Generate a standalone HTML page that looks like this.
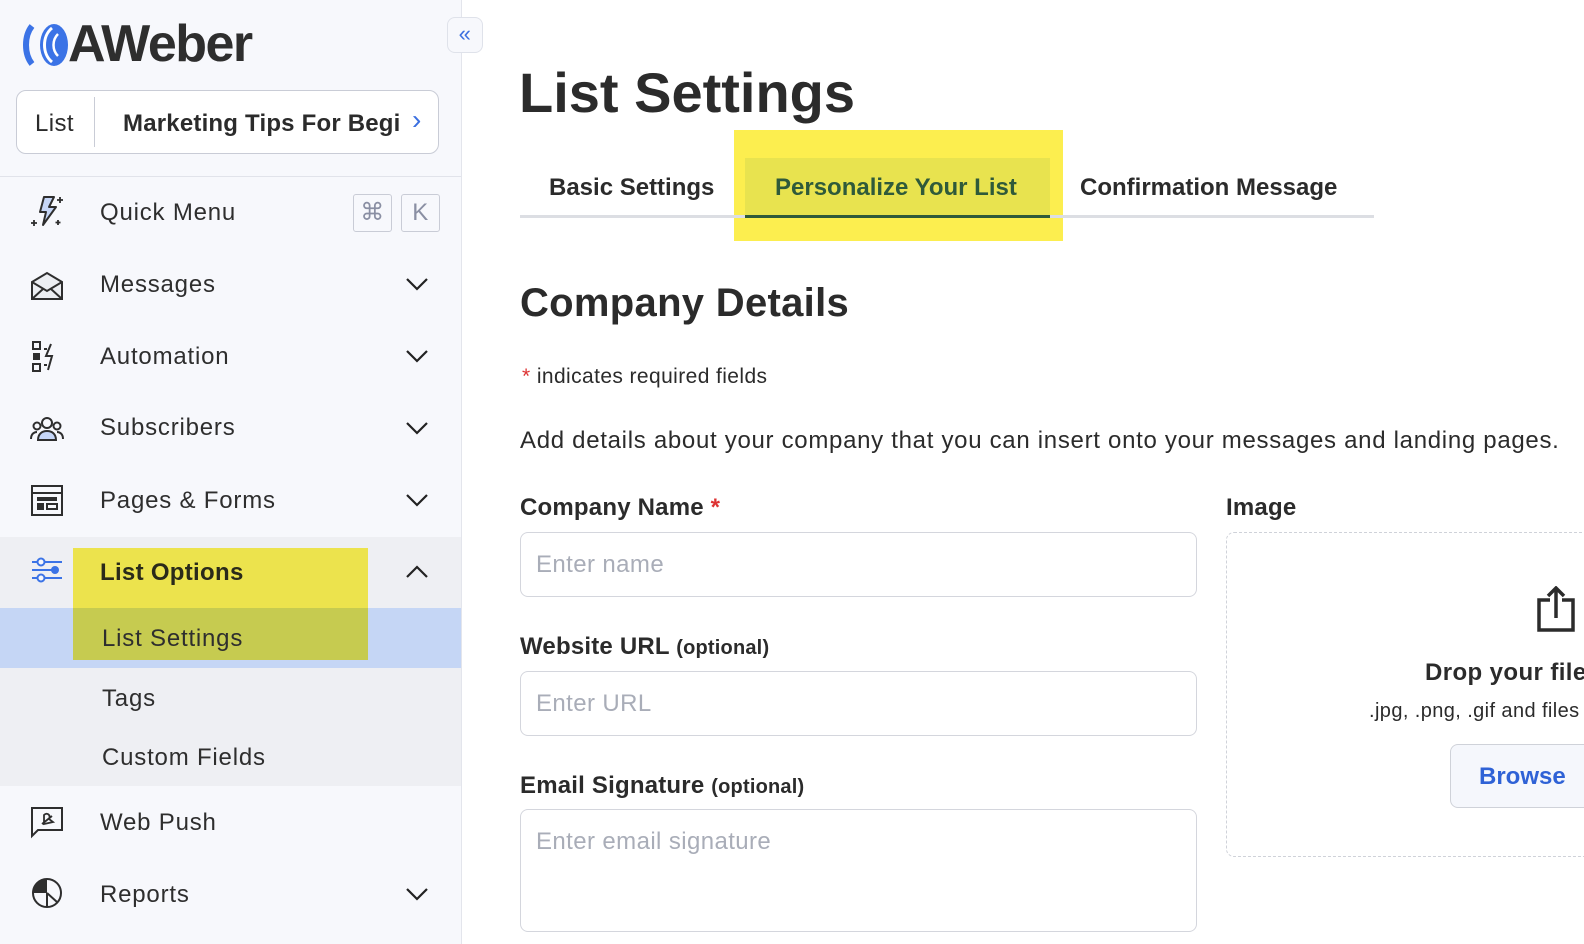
<!DOCTYPE html>
<html><head><meta charset="utf-8"><style>
*{box-sizing:border-box;margin:0;padding:0}
body{width:1584px;height:944px;overflow:hidden;background:#fff;font-family:"Liberation Sans",Roboto,sans-serif;color:#2b2b2b;position:relative;letter-spacing:0.4px}
.side{position:absolute;left:0;top:0;width:462px;height:944px;background:#f7f8fc;border-right:1px solid #e3e5ec}
.abs{position:absolute}
.nav{position:absolute;left:100px;font-size:24px;color:#2e2e2e;letter-spacing:0.8px}
.chev{position:absolute;left:405px;width:24px;height:24px}
.ic{position:absolute;left:30px;width:34px;height:34px}
.inp{position:absolute;left:520px;width:677px;height:65px;border:1px solid #d4d6dd;border-radius:8px;font-size:24px;color:#a9adb8;padding:18px 15px}
.lbl{position:absolute;left:520px;font-size:24px;font-weight:bold;color:#2b2b2b;letter-spacing:0.2px}
.lbl span{font-size:20px}
</style></head><body>
<div class="side">
 <svg class="abs" style="left:22px;top:22px" width="50" height="46" viewBox="0 0 50 46"><path d="M10 4 C2 14 2 32 10 42" stroke="#3b73e6" stroke-width="6" fill="none"/><ellipse cx="32" cy="23" rx="14" ry="21" fill="#3b73e6"/><path d="M30 6 C20 14 20 32 30 40" stroke="#fff" stroke-width="3" fill="none"/><path d="M36 12 C30 18 30 28 36 34" stroke="#fff" stroke-width="2.5" fill="none"/></svg>
 <div class="abs" style="left:68px;top:14px;font-size:52px;font-weight:bold;color:#2e2e2e;letter-spacing:-1.5px">AWeber</div>
 <div class="abs" style="left:447px;top:17px;width:36px;height:36px;border:1px solid #dfe2ea;border-radius:8px;background:#f7f8fc;color:#3b6fe0;font-size:22px;text-align:center;line-height:32px">«</div>
 <div class="abs" style="left:16px;top:90px;width:423px;height:64px;border:1px solid #c9ccd6;border-radius:10px;background:#fff"></div>
 <div class="abs" style="left:94px;top:97px;width:1px;height:50px;background:#c9ccd6"></div>
 <div class="abs" style="left:35px;top:110px;font-size:24px">List</div>
 <div class="abs" style="left:123px;top:110px;font-size:24px;font-weight:600;width:278px;overflow:hidden;white-space:nowrap;letter-spacing:0.2px">Marketing Tips For Beginners</div>
 <div class="abs" style="left:412px;top:104px;font-size:28px;color:#3b6fe0">›</div>
 <div class="abs" style="left:0;top:176px;width:461px;height:1px;background:#e1e3ea"></div>
 <svg class="ic" style="top:194px" viewBox="0 0 34 34"><path d="M14 3h10l-5 10h7L13 31l3-13h-6z" fill="#c6d6f7" stroke="#2e2e2e" stroke-width="2" stroke-linejoin="round"/><path d="M30 3v6M27 6h6M4 26v6M1 29h6M28 26v5M25.5 28.5h5" stroke="#2e2e2e" stroke-width="1.8"/></svg>
 <div class="nav" style="top:199px">Quick Menu</div>
 <div class="abs" style="left:353px;top:194px;width:39px;height:38px;border:1px solid #c9ccd6;border-radius:3px;color:#8a8fa3;font-size:24px;text-align:center;line-height:36px">⌘</div>
 <div class="abs" style="left:401px;top:194px;width:39px;height:38px;border:1px solid #c9ccd6;border-radius:3px;color:#8a8fa3;font-size:24px;text-align:center;line-height:36px">K</div>
 <svg class="ic" style="top:270px" viewBox="0 0 34 34"><path d="M2 12 L17 3 L32 12 V29 H2Z" fill="#eceef2" stroke="#2e2e2e" stroke-width="2"/><path d="M2 12 L17 21 L32 12 M2 29 L13 19 M32 29 L21 19" stroke="#2e2e2e" stroke-width="2" fill="none"/></svg>
 <div class="nav" style="top:271px">Messages</div>
 <svg class="chev" style="top:272px" viewBox="0 0 24 24"><path d="M2 7l10 10 10-10" stroke="#222" stroke-width="2.2" fill="none"/></svg>
 <svg class="ic" style="top:340px" viewBox="0 0 34 34"><rect x="3" y="2" width="7" height="7" fill="none" stroke="#2e2e2e" stroke-width="2"/><rect x="3" y="13" width="7" height="7" fill="#2e2e2e"/><rect x="3" y="24" width="7" height="7" fill="none" stroke="#2e2e2e" stroke-width="2"/><path d="M21 4l-5 12h6l-4 14" stroke="#2e2e2e" stroke-width="2" fill="none"/><path d="M14 9h3M14 25h3" stroke="#2e2e2e" stroke-width="2"/></svg>
 <div class="nav" style="top:343px">Automation</div>
 <svg class="chev" style="top:344px" viewBox="0 0 24 24"><path d="M2 7l10 10 10-10" stroke="#222" stroke-width="2.2" fill="none"/></svg>
 <svg class="ic" style="top:412px" viewBox="0 0 34 34"><circle cx="17" cy="11" r="5" fill="none" stroke="#2e2e2e" stroke-width="2"/><path d="M8 28c0-6 4-9 9-9s9 3 9 9z" fill="#c6d6f7" stroke="#2e2e2e" stroke-width="2"/><circle cx="7" cy="14" r="3.5" fill="none" stroke="#2e2e2e" stroke-width="2"/><circle cx="27" cy="14" r="3.5" fill="none" stroke="#2e2e2e" stroke-width="2"/><path d="M1 27c0-5 3-7 6-7M33 27c0-5-3-7-6-7" stroke="#2e2e2e" stroke-width="2" fill="none"/></svg>
 <div class="nav" style="top:414px">Subscribers</div>
 <svg class="chev" style="top:416px" viewBox="0 0 24 24"><path d="M2 7l10 10 10-10" stroke="#222" stroke-width="2.2" fill="none"/></svg>
 <svg class="ic" style="top:484px" viewBox="0 0 34 34"><rect x="2" y="2" width="30" height="29" fill="none" stroke="#2e2e2e" stroke-width="2"/><path d="M2 9h30" stroke="#2e2e2e" stroke-width="2"/><rect x="7" y="13" width="20" height="4" fill="#2e2e2e"/><rect x="7" y="19" width="7" height="7" fill="#2e2e2e"/><rect x="17" y="20" width="10" height="5" fill="none" stroke="#2e2e2e" stroke-width="2"/></svg>
 <div class="nav" style="top:487px">Pages &amp; Forms</div>
 <svg class="chev" style="top:488px" viewBox="0 0 24 24"><path d="M2 7l10 10 10-10" stroke="#222" stroke-width="2.2" fill="none"/></svg>
 <div class="abs" style="left:0;top:537px;width:461px;height:249px;background:#eeeff3"></div>
 <div class="abs" style="left:0;top:608px;width:461px;height:60px;background:#c5d6f5"></div>
 <div class="abs" style="left:73px;top:548px;width:295px;height:60px;background:#ece34d"></div>
 <div class="abs" style="left:73px;top:608px;width:295px;height:52px;background:#c6cb50"></div>
 <svg class="ic" style="top:555px" viewBox="0 0 34 34"><path d="M2 4h5M15 4h17M2 12h20M2 20h5M15 20h17" stroke="#3b73e6" stroke-width="2" transform="translate(0,3)"/><circle cx="11" cy="7" r="3.5" fill="#f7f8fc" stroke="#3b73e6" stroke-width="2"/><circle cx="25" cy="15" r="4" fill="#3b73e6"/><circle cx="11" cy="23" r="3.5" fill="#f7f8fc" stroke="#3b73e6" stroke-width="2"/></svg>
 <div class="nav" style="top:559px;font-weight:bold;color:#2a2a1a;letter-spacing:0.3px">List Options</div>
 <svg class="chev" style="top:560px" viewBox="0 0 24 24"><path d="M2 17l10-10 10 10" stroke="#222" stroke-width="2.2" fill="none"/></svg>
 <div class="nav" style="left:102px;top:625px">List Settings</div>
 <div class="nav" style="left:102px;top:685px">Tags</div>
 <div class="nav" style="left:102px;top:744px">Custom Fields</div>
 <svg class="ic" style="top:806px" viewBox="0 0 34 34"><path d="M2 2h30v22H8l-6 6z" fill="none" stroke="#2e2e2e" stroke-width="2"/><path d="M12 18l10-8M14 9c3-3 7 0 5 4l4 3-9 2z" fill="none" stroke="#2e2e2e" stroke-width="1.8"/></svg>
 <div class="nav" style="top:809px">Web Push</div>
 <svg class="ic" style="top:876px" viewBox="0 0 34 34"><circle cx="17" cy="17" r="14" fill="none" stroke="#2e2e2e" stroke-width="2"/><path d="M17 3A14 14 0 0 0 3 17h14z" fill="#2e2e2e"/><path d="M17 17l10 9M17 17V31" stroke="#2e2e2e" stroke-width="2"/></svg>
 <div class="nav" style="top:881px">Reports</div>
 <svg class="chev" style="top:882px" viewBox="0 0 24 24"><path d="M2 7l10 10 10-10" stroke="#222" stroke-width="2.2" fill="none"/></svg>
</div>

<div class="abs" style="left:519px;top:60px;font-size:56px;font-weight:bold;color:#2b2b2b;letter-spacing:0">List Settings</div>
<div class="abs" style="left:734px;top:130px;width:329px;height:111px;background:#fcee4f"></div>
<div class="abs" style="left:745px;top:158px;width:305px;height:60px;background:#e8e34f"></div>
<div class="abs" style="left:520px;top:215px;width:854px;height:3px;background:#dcdee3"></div>
<div class="abs" style="left:745px;top:215px;width:305px;height:3px;background:#2f5a3a"></div>
<div class="abs" style="left:549px;top:174px;font-size:24px;font-weight:600;letter-spacing:0">Basic Settings</div>
<div class="abs" style="left:775px;top:174px;font-size:24px;font-weight:600;color:#2f5a3a;letter-spacing:0">Personalize Your List</div>
<div class="abs" style="left:1080px;top:174px;font-size:24px;font-weight:600;letter-spacing:0">Confirmation Message</div>
<div class="abs" style="left:520px;top:281px;font-size:40px;font-weight:bold;letter-spacing:0.3px">Company Details</div>
<div class="abs" style="left:522px;top:365px;font-size:21px"><span style="color:#d33">*</span> indicates required fields</div>
<div class="abs" style="left:520px;top:427px;font-size:24px;white-space:nowrap;letter-spacing:0.7px">Add details about your company that you can insert onto your messages and landing pages.</div>
<div class="lbl" style="top:494px">Company Name <span style="color:#d33;font-size:24px">*</span></div>
<div class="inp" style="top:532px">Enter name</div>
<div class="lbl" style="top:633px">Website URL <span>(optional)</span></div>
<div class="inp" style="top:671px">Enter URL</div>
<div class="lbl" style="top:772px">Email Signature <span>(optional)</span></div>
<div class="inp" style="top:809px;height:123px">Enter email signature</div>
<div class="lbl" style="left:1226px;top:494px">Image</div>
<div class="abs" style="left:1226px;top:532px;width:400px;height:325px;border:1.5px dashed #cfd2d9;border-radius:8px"></div>
<svg class="abs" style="left:1536px;top:586px" width="40" height="46" viewBox="0 0 40 46"><path d="M14 14H3v30h34V14H26M20 32V2M12 10l8-8 8 8" fill="none" stroke="#2b2b2b" stroke-width="3.5"/></svg>
<div class="abs" style="left:1425px;top:659px;font-size:24px;font-weight:bold;white-space:nowrap">Drop your files here</div>
<div class="abs" style="left:1369px;top:700px;font-size:20px;white-space:nowrap">.jpg, .png, .gif and files</div>
<div class="abs" style="left:1450px;top:744px;width:200px;height:64px;border:1px solid #cfd2d9;border-radius:8px;background:#f5f7fc;font-size:24px;font-weight:600;color:#2f62d6;padding:18px 28px;letter-spacing:0">Browse</div>
</body></html>
